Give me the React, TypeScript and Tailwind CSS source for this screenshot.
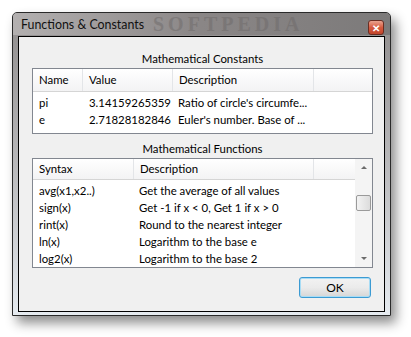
import React from "react";

const font = { fontFamily: "Lato, 'Noto Sans', sans-serif" };

const constants = [
  { name: "pi", value: "3.14159265359", desc: "Ratio of circle's circumfe..." },
  { name: "e", value: "2.71828182846", desc: "Euler's number. Base of ..." },
];

const functions = [
  { syntax: "avg(x1,x2..)", desc: "Get the average of all values" },
  { syntax: "sign(x)", desc: "Get -1 if x < 0, Get 1 if x > 0" },
  { syntax: "rint(x)", desc: "Round to the nearest integer" },
  { syntax: "ln(x)", desc: "Logarithm to the base e" },
  { syntax: "log2(x)", desc: "Logarithm to the base 2" },
];

function HeaderCell({ label, width }: { label?: string; width: string }) {
  return (
    <div className={`${width} h-full flex items-center pl-[6px] border-r border-[#e3e5e8] shrink-0`}>
      {label}
    </div>
  );
}

function ScrollBar() {
  return (
    <div className="w-[17px] h-full bg-[#f4f4f4] flex flex-col items-center shrink-0">
      <div className="h-[17px] w-full flex items-center justify-center">
        <div className="w-0 h-0 border-l-[3px] border-r-[3px] border-b-[3px] border-l-transparent border-r-transparent border-b-[#6b6b6b]" />
      </div>
      <div className="h-[19px]" />
      <div className="w-[15px] h-[16px] rounded-[2px] border border-[#9a9a9a] bg-gradient-to-r from-[#f3f3f3] to-[#dcdcdc]" />
      <div className="flex-1" />
      <div className="h-[17px] w-full flex items-center justify-center">
        <div className="w-0 h-0 border-l-[3px] border-r-[3px] border-t-[3px] border-l-transparent border-r-transparent border-t-[#6b6b6b]" />
      </div>
    </div>
  );
}

export default function App() {
  return (
    <div className="w-[411px] h-[337px] bg-white pt-[12px] pl-[12px] text-[11.4px] text-black" style={font}>
      <div className="relative w-[379px] h-[304px] border border-[#2a2a2a] rounded-t-[5px] bg-gradient-to-b from-[#8f8c8c] via-[#b9b9bb] to-[#e6ebf0] shadow-[5px_7px_12px_rgba(0,0,0,0.45)] flex flex-col">
        {/* title bar */}
        <div className="relative h-[22px] flex items-end justify-between pl-[8px] pr-[6px] rounded-t-[4px] bg-gradient-to-r from-[#b3b0b0] via-[#8a8686] to-[#7c7a7a]">
          <span className="absolute left-[140px] top-[1px] text-[20px] leading-[20px] font-bold tracking-[4px] text-[#6e6a6a] opacity-50 select-none" style={{ fontFamily: "'Liberation Serif', serif" }}>
            SOFTPEDIA
          </span>
          <span className="relative self-center text-[12.4px] text-[#111] mt-[2px]">Functions &amp; Constants</span>
          <div className="relative w-[16px] h-[15px] rounded-[3px] border border-[#6b2d22] bg-gradient-to-b from-[#e9a28f] via-[#d65a3f] to-[#c2452b] flex items-center justify-center text-white text-[10px] font-bold leading-none">
            ✕
          </div>
        </div>
        {/* client */}
        <div className="mx-[5px] mt-[1px] h-[276px] border border-black bg-[#f0f0f0] flex flex-col pl-[13px] pr-[11px]">
          <div className="h-[15px] mt-[14px] flex items-center justify-center">Mathematical Constants</div>
          <div className="mt-[2px] h-[66px] border border-[#828790] bg-white flex flex-col">
            <div className="h-[23px] flex border-b border-[#d5d5d5] bg-gradient-to-b from-white to-[#f3f3f4]">
              <HeaderCell label="Name" width="w-[50px]" />
              <HeaderCell label="Value" width="w-[90px]" />
              <HeaderCell label="Description" width="w-[141px]" />
              <div className="flex-1" />
            </div>
            <div className="pt-[2px]">
              {constants.map((c) => (
                <div key={c.name} className="h-[17px] flex items-center">
                  <div className="w-[50px] pl-[6px] shrink-0">{c.name}</div>
                  <div className="w-[90px] pl-[6px] shrink-0">{c.value}</div>
                  <div className="w-[141px] pl-[5px] shrink-0 whitespace-nowrap overflow-hidden">{c.desc}</div>
                </div>
              ))}
            </div>
          </div>
          <div className="h-[15px] mt-[7px] flex items-center justify-center">Mathematical Functions</div>
          <div className="mt-[2px] h-[110px] border border-[#828790] bg-white flex">
            <div className="flex-1 flex flex-col min-w-0">
              <div className="h-[23px] flex border-b border-[#d5d5d5] bg-gradient-to-b from-white to-[#f3f3f4]">
                <HeaderCell label="Syntax" width="w-[101px]" />
                <HeaderCell label="Description" width="w-[180px]" />
                <div className="flex-1" />
              </div>
              <div className="pt-[2px]">
                {functions.map((f) => (
                  <div key={f.syntax} className="h-[17px] flex items-center">
                    <div className="w-[101px] pl-[6px] shrink-0">{f.syntax}</div>
                    <div className="pl-[5px] whitespace-nowrap">{f.desc}</div>
                  </div>
                ))}
              </div>
            </div>
            <ScrollBar />
          </div>
          <div className="flex justify-end mt-[9px] pr-[2px]">
            <button className="w-[72px] h-[21px] rounded-[3px] border border-[#3c9bd3] bg-gradient-to-b from-[#f2f2f2] via-[#ebebeb] to-[#d6d6d6] shadow-[inset_0_0_0_1px_#a8dcf5] text-[12px] flex items-center justify-center">
              OK
            </button>
          </div>
        </div>
      </div>
    </div>
  );
}
